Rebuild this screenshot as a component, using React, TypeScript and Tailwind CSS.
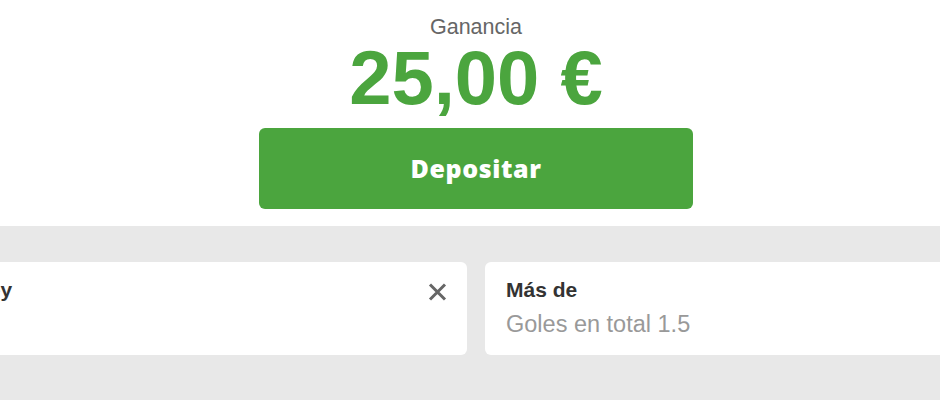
import React from "react";

export default function App() {
  return (
    <div
      className="w-[940px] h-[400px] overflow-hidden bg-white flex flex-col"
      style={{ fontFamily: '"Liberation Sans", Arial, sans-serif' }}
    >
      <div className="h-[226px] shrink-0 flex flex-col items-center pl-[12px] pt-[15px]">
        <div className="text-[21.5px] leading-[24px] text-[#666666]">Ganancia</div>
        <div className="mt-[1px] text-[76px] leading-[75px] font-bold text-[#4ba53e]">25,00 €</div>
        <button
          className="mt-[13px] w-[434px] h-[81px] rounded-[6px] bg-[#4ba53e] text-white text-[25px] tracking-[0.6px] font-extrabold flex items-center justify-center"
          style={{ fontFamily: '"Open Sans", sans-serif' }}
        >
          Depositar
        </button>
      </div>
      <div className="flex-1 bg-[#e8e8e8] pt-[36px]">
        <div className="flex gap-[18px] -ml-[87px]">
          <div className="w-[554px] h-[93px] shrink-0 bg-white rounded-[6px] pl-[21px] pr-[20px] pt-[15px] flex justify-between items-start">
            <div className="text-[21px] leading-[25px] font-bold text-[#333333]">Burnley</div>
            <svg className="mt-[6px]" width="19" height="18" viewBox="0 0 19 18">
              <path d="M2 1.5 L17 16.5 M17 1.5 L2 16.5" stroke="#666666" strokeWidth="3" strokeLinecap="butt" fill="none" />
            </svg>
          </div>
          <div className="w-[554px] h-[93px] shrink-0 bg-white rounded-[6px] pl-[21px] pr-[20px] pt-[15px] flex flex-col">
            <div className="text-[21px] leading-[25px] font-bold text-[#333333]">Más de</div>
            <div className="mt-[9px] text-[23.5px] leading-[27px] text-[#999999]">Goles en total 1.5</div>
          </div>
        </div>
      </div>
    </div>
  );
}
